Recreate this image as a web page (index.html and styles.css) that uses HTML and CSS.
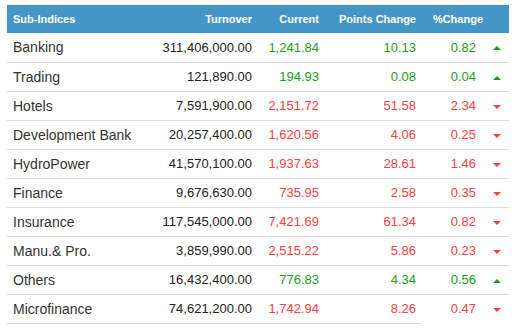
FILE: index.html
```html
<!DOCTYPE html>
<html lang="en">
<head>
    <meta charset="UTF-8">
    <meta name="viewport" content="width=device-width, initial-scale=1.0">
    <title>Sub-Indices</title>
    <link rel="stylesheet" href="styles.css">
</head>
<body>
    <table class="indices">
        <thead>
            <tr>
                <th class="name">Sub-Indices</th>
                <th class="num turnover">Turnover</th>
                <th class="num current">Current</th>
                <th class="num points">Points Change</th>
                <th class="num pct">%Change</th>
                <th class="arrow"></th>
            </tr>
        </thead>
        <tbody>
            <tr class="up">
                <td class="name">Banking</td>
                <td class="num turnover">311,406,000.00</td>
                <td class="num current">1,241.84</td>
                <td class="num points">10.13</td>
                <td class="num pct">0.82</td>
                <td class="arrow"><span class="tri"></span></td>
            </tr>
            <tr class="up">
                <td class="name">Trading</td>
                <td class="num turnover">121,890.00</td>
                <td class="num current">194.93</td>
                <td class="num points">0.08</td>
                <td class="num pct">0.04</td>
                <td class="arrow"><span class="tri"></span></td>
            </tr>
            <tr class="down">
                <td class="name">Hotels</td>
                <td class="num turnover">7,591,900.00</td>
                <td class="num current">2,151.72</td>
                <td class="num points">51.58</td>
                <td class="num pct">2.34</td>
                <td class="arrow"><span class="tri"></span></td>
            </tr>
            <tr class="down">
                <td class="name">Development Bank</td>
                <td class="num turnover">20,257,400.00</td>
                <td class="num current">1,620.56</td>
                <td class="num points">4.06</td>
                <td class="num pct">0.25</td>
                <td class="arrow"><span class="tri"></span></td>
            </tr>
            <tr class="down">
                <td class="name">HydroPower</td>
                <td class="num turnover">41,570,100.00</td>
                <td class="num current">1,937.63</td>
                <td class="num points">28.61</td>
                <td class="num pct">1.46</td>
                <td class="arrow"><span class="tri"></span></td>
            </tr>
            <tr class="down">
                <td class="name">Finance</td>
                <td class="num turnover">9,676,630.00</td>
                <td class="num current">735.95</td>
                <td class="num points">2.58</td>
                <td class="num pct">0.35</td>
                <td class="arrow"><span class="tri"></span></td>
            </tr>
            <tr class="down">
                <td class="name">Insurance</td>
                <td class="num turnover">117,545,000.00</td>
                <td class="num current">7,421.69</td>
                <td class="num points">61.34</td>
                <td class="num pct">0.82</td>
                <td class="arrow"><span class="tri"></span></td>
            </tr>
            <tr class="down">
                <td class="name">Manu.&amp; Pro.</td>
                <td class="num turnover">3,859,990.00</td>
                <td class="num current">2,515.22</td>
                <td class="num points">5.86</td>
                <td class="num pct">0.23</td>
                <td class="arrow"><span class="tri"></span></td>
            </tr>
            <tr class="up">
                <td class="name">Others</td>
                <td class="num turnover">16,432,400.00</td>
                <td class="num current">776.83</td>
                <td class="num points">4.34</td>
                <td class="num pct">0.56</td>
                <td class="arrow"><span class="tri"></span></td>
            </tr>
            <tr class="down last">
                <td class="name">Microfinance</td>
                <td class="num turnover">74,621,200.00</td>
                <td class="num current">1,742.94</td>
                <td class="num points">8.26</td>
                <td class="num pct">0.47</td>
                <td class="arrow"><span class="tri"></span></td>
            </tr>
        </tbody>
    </table>
</body>
</html>
```
FILE: styles.css
```css
* {
    margin: 0;
    padding: 0;
    box-sizing: border-box;
}

body {
    background: #fff;
    font-family: "Liberation Sans", Arial, sans-serif;
    color: #333;
    padding: 5px 0 0 7px;
}

.indices {
    border-collapse: collapse;
    table-layout: fixed;
    width: 502px;
}

.indices th {
    background: #4497c4;
    color: #fff;
    font-size: 11px;
    font-weight: bold;
    height: 28px;
    padding: 0 6px;
    text-align: left;
}

.indices td {
    font-size: 13px;
    height: 29px;
    padding: 0 6px;
    border-bottom: 1px solid #ddd;
}

.indices td.name {
    font-size: 14px;
}

.indices .name { width: 143px; }
.indices .turnover { width: 108px; }
.indices .current { width: 67px; }
.indices .points { width: 97px; }
.indices .pct { width: 67px; }
.indices .arrow { width: 20px; padding: 0 0 0 4px; }

.indices .num {
    text-align: right;
}

.indices td.turnover {
    color: #222;
}

.indices td.pct {
    padding-right: 13px;
}

/* last row has no rule under the % and arrow cells */
.indices tr.last td.pct,
.indices tr.last td.arrow {
    border-bottom: none;
}

.up td.current, .up td.points, .up td.pct {
    color: #1a9e1a;
}

.down td.current, .down td.points, .down td.pct {
    color: #ff4040;
}

.tri {
    display: inline-block;
    width: 0;
    height: 0;
    border-left: 4px solid transparent;
    border-right: 4px solid transparent;
    vertical-align: middle;
}

.up .tri {
    border-bottom: 4px solid #1a9e1a;
}

.down .tri {
    border-top: 4px solid #ff4040;
}
```
